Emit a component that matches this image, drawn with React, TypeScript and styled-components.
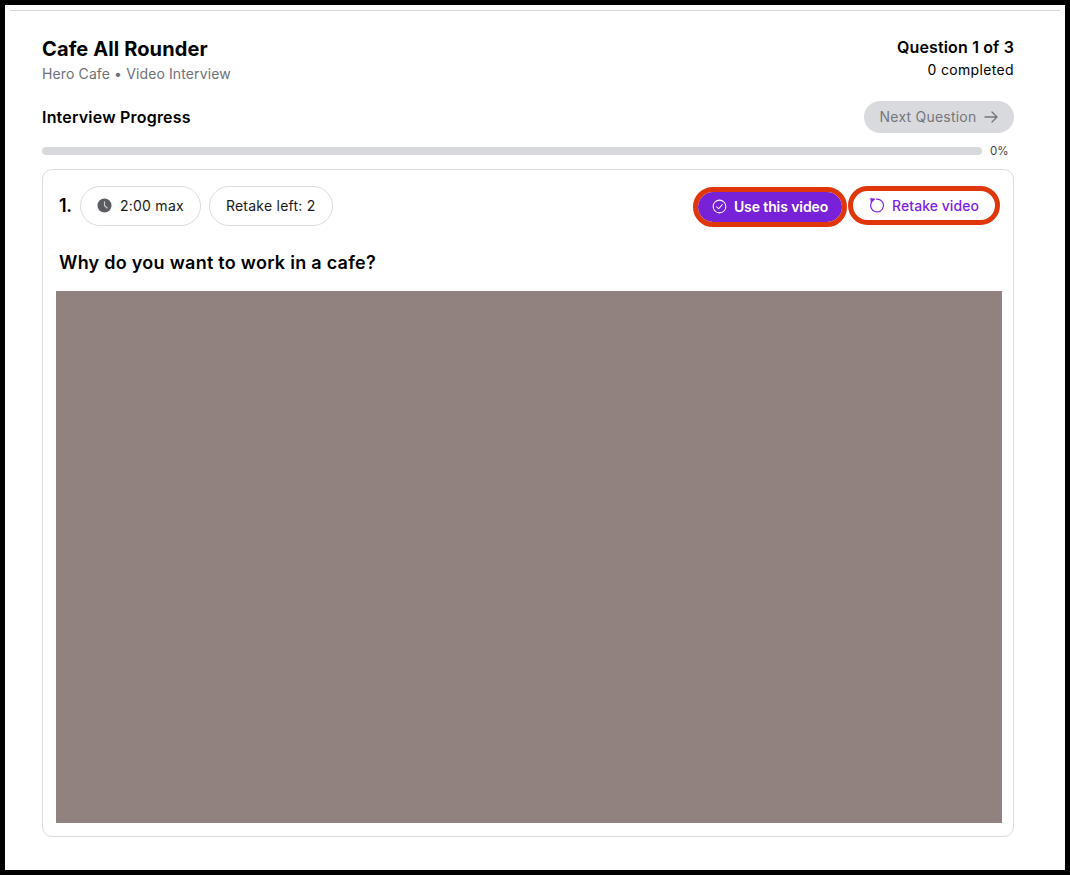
import React from "react";
import styled, { createGlobalStyle } from "styled-components";

const Global = createGlobalStyle`
  html, body { margin: 0; padding: 0; background: #000; }
  body { font-family: "Inter", "Liberation Sans", sans-serif; color: #000; }
`;

const Frame = styled.div`
  box-sizing: border-box;
  width: 1060px;
  height: 865px;
  margin: 5px;
  background: #fff;
  padding: 5px 5px 0;
`;

const Rule = styled.div`
  height: 1px;
  background: #d6d6d6;
`;

const Content = styled.div`
  padding: 26px 46px 0 32px;
  display: flex;
  flex-direction: column;
`;

const Header = styled.header`
  display: flex;
  justify-content: space-between;
  align-items: flex-start;
  height: 64px;
`;

const TitleBlock = styled.div`
  display: flex;
  flex-direction: column;
  gap: 3px;
`;

const Title = styled.h1`
  margin: 0;
  font-size: 20px;
  line-height: 24px;
  font-weight: 700;
  letter-spacing: 0.12px;
`;

const Subtitle = styled.div`
  font-size: 14px;
  line-height: 20px;
  color: #6f7178;
  letter-spacing: 0.12px;
`;

const Status = styled.div`
  display: flex;
  flex-direction: column;
  align-items: flex-end;
  gap: 3px;
`;

const StatusMain = styled.div`
  font-size: 16px;
  line-height: 20px;
  font-weight: 600;
  letter-spacing: 0.15px;
`;

const StatusSub = styled.div`
  font-size: 14px;
  line-height: 20px;
  letter-spacing: 0.35px;
`;

const ProgressHead = styled.div`
  display: flex;
  justify-content: space-between;
  align-items: center;
  height: 32px;
`;

const ProgressLabel = styled.div`
  font-size: 16px;
  font-weight: 600;
  letter-spacing: 0.2px;
`;

const NextButton = styled.button`
  display: flex;
  align-items: center;
  justify-content: center;
  gap: 7px;
  width: 150px;
  height: 32px;
  border: 0;
  border-radius: 16px;
  padding: 0 0 1px 1px;
  background: #d9dade;
  color: #74767c;
  font: 400 14px "Inter", "Liberation Sans", sans-serif;
  letter-spacing: 0.22px;
`;

const ProgressRow = styled.div`
  display: flex;
  align-items: center;
  gap: 8px;
  margin-top: 14px;
  height: 8px;
`;

const Track = styled.div`
  flex: 1;
  height: 8px;
  border-radius: 4px;
  background: #d9dade;
`;

const Percent = styled.div`
  width: 24px;
  font-size: 11.5px;
  color: #44464c;
`;

const Card = styled.section`
  box-sizing: border-box;
  margin-top: 14px;
  height: 668px;
  border: 1px solid #dcdcdf;
  border-radius: 10px;
  padding: 16px 11px 13px 13px;
  display: flex;
  flex-direction: column;
`;

const CardBar = styled.div`
  display: flex;
  align-items: center;
  justify-content: space-between;
  height: 40px;
`;

const Meta = styled.div`
  display: flex;
  align-items: center;
  gap: 8px;
`;

const Number = styled.span`
  width: 13px;
  margin: 0 0 1px 3px;
  font-size: 18px;
  font-weight: 600;
  letter-spacing: -0.3px;
`;

const Pill = styled.div`
  box-sizing: border-box;
  height: 40px;
  display: flex;
  align-items: center;
  gap: 8px;
  padding: 0 16px 1px;
  border: 1px solid #dcdcdf;
  border-radius: 20px;
  font-size: 14px;
  letter-spacing: 0.24px;
  color: #1a1a1a;
`;

const Actions = styled.div`
  display: flex;
  align-items: flex-start;
  align-self: flex-start;
  gap: 11px;
  margin: 5px 7px 0 0;
`;

const ActionButton = styled.button<{ $primary?: boolean }>`
  box-sizing: border-box;
  height: ${(p) => (p.$primary ? 30 : 29)}px;
  margin-top: ${(p) => (p.$primary ? 1 : 0)}px;
  display: flex;
  align-items: center;
  justify-content: center;
  gap: 7px;
  border: 0;
  border-radius: 15px;
  padding: 0 0 1px;
  outline: 5px solid #e0360c;
  outline-offset: 0;
  font: ${(p) => (p.$primary ? 600 : 500)} 14px "Inter", "Liberation Sans", sans-serif;
  letter-spacing: ${(p) => (p.$primary ? "-0.1px" : "0.05px")};
  width: ${(p) => (p.$primary ? 144 : 142)}px;
  background: ${(p) => (p.$primary ? "#7722d8" : "#fff")};
  color: ${(p) => (p.$primary ? "#fff" : "#7d22e6")};
`;

const Question = styled.h2`
  margin: 25px 0 0 3px;
  height: 24px;
  font-size: 18px;
  line-height: 24px;
  font-weight: 600;
  letter-spacing: 0.27px;
`;

const Video = styled.div`
  flex: 1;
  margin-top: 16px;
  background: #91817f;
`;

export default function App() {
  return (
    <>
      <Global />
      <Frame>
        <Rule />
        <Content>
          <Header>
            <TitleBlock>
              <Title>Cafe All Rounder</Title>
              <Subtitle>Hero Cafe • Video Interview</Subtitle>
            </TitleBlock>
            <Status>
              <StatusMain>Question 1 of 3</StatusMain>
              <StatusSub>0 completed</StatusSub>
            </Status>
          </Header>
          <ProgressHead>
            <ProgressLabel>Interview Progress</ProgressLabel>
            <NextButton disabled>
              Next Question
              <svg width="16" height="16" viewBox="0 0 16 16" fill="none" stroke="#74767c" strokeWidth="1.4" strokeLinecap="round" strokeLinejoin="round">
                <path d="M2 8h12M9 3l5 5-5 5" />
              </svg>
            </NextButton>
          </ProgressHead>
          <ProgressRow>
            <Track />
            <Percent>0%</Percent>
          </ProgressRow>
          <Card>
            <CardBar>
              <Meta>
                <Number>1.</Number>
                <Pill>
                  <svg width="15" height="15" viewBox="0 0 16 16">
                    <circle cx="8" cy="8" r="7.5" fill="#5a5c61" />
                    <path d="M8 4v4.2l3 2.4" fill="none" stroke="#c9cacd" strokeWidth="1.2" strokeLinecap="round" strokeLinejoin="round" />
                  </svg>
                  2:00 max
                </Pill>
                <Pill>Retake left: 2</Pill>
              </Meta>
              <Actions>
                <ActionButton $primary>
                  <svg width="15" height="15" viewBox="0 0 16 16" fill="none" stroke="#fff" strokeWidth="1.1" strokeLinecap="round" strokeLinejoin="round">
                    <circle cx="8" cy="8" r="6.8" />
                    <path d="M5 8.3l2.1 2.1L11 6" />
                  </svg>
                  Use this video
                </ActionButton>
                <ActionButton>
                  <svg width="16" height="16" viewBox="0 0 16 16" fill="none" stroke="#7d22e6" strokeWidth="1.2" strokeLinecap="round" strokeLinejoin="round">
                    <path d="M7.6 2.1A6.4 6.4 0 1 1 2.6 5.2" />
                    <path d="M1.8 1.4L6 1.9 2.4 5.6Z" fill="#7d22e6" strokeWidth="0.6" />
                  </svg>
                  Retake video
                </ActionButton>
              </Actions>
            </CardBar>
            <Question>Why do you want to work in a cafe?</Question>
            <Video />
          </Card>
        </Content>
      </Frame>
    </>
  );
}
